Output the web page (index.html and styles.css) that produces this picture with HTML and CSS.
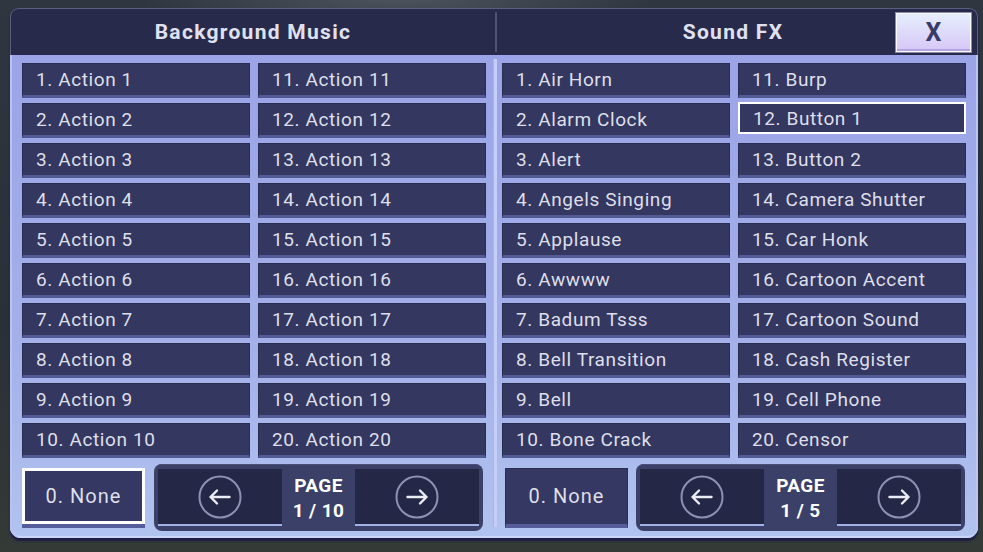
FILE: index.html
```html
<!DOCTYPE html>
<html lang="en">
<head>
    <meta charset="UTF-8">
    <meta name="viewport" content="width=device-width, initial-scale=1.0">
    <title>Sound Board</title>
    <link rel="stylesheet" href="styles.css">
</head>
<body>
    <div class="dialog">
        <div class="header">
            <div class="title title-left">Background Music</div>
            <div class="title title-right">Sound FX</div>
            <button class="close" type="button">X</button>
        </div>

        <div class="content">
            <section class="panel">
                <div class="list">
                    <button class="item">1. Action 1</button>
                    <button class="item">2. Action 2</button>
                    <button class="item">3. Action 3</button>
                    <button class="item">4. Action 4</button>
                    <button class="item">5. Action 5</button>
                    <button class="item">6. Action 6</button>
                    <button class="item">7. Action 7</button>
                    <button class="item">8. Action 8</button>
                    <button class="item">9. Action 9</button>
                    <button class="item">10. Action 10</button>
                    <button class="item">11. Action 11</button>
                    <button class="item">12. Action 12</button>
                    <button class="item">13. Action 13</button>
                    <button class="item">14. Action 14</button>
                    <button class="item">15. Action 15</button>
                    <button class="item">16. Action 16</button>
                    <button class="item">17. Action 17</button>
                    <button class="item">18. Action 18</button>
                    <button class="item">19. Action 19</button>
                    <button class="item">20. Action 20</button>
                </div>
                <div class="footer">
                    <button class="none selected">0. None</button>
                    <div class="pager">
                        <button class="pg" type="button">
                            <svg viewBox="0 0 44 44" width="44" height="44"><circle cx="22" cy="22" r="20.5" class="ring"/><path d="M31.5 22H12.5M19 15.5L12.5 22L19 28.5" class="arrow"/></svg>
                        </button>
                        <div class="pg-label">PAGE<br>1 / 10</div>
                        <button class="pg" type="button">
                            <svg viewBox="0 0 44 44" width="44" height="44"><circle cx="22" cy="22" r="20.5" class="ring"/><path d="M12.5 22H31.5M25 15.5L31.5 22L25 28.5" class="arrow"/></svg>
                        </button>
                    </div>
                </div>
            </section>

            <div class="divider"></div>

            <section class="panel">
                <div class="list">
                    <button class="item">1. Air Horn</button>
                    <button class="item">2. Alarm Clock</button>
                    <button class="item">3. Alert</button>
                    <button class="item">4. Angels Singing</button>
                    <button class="item">5. Applause</button>
                    <button class="item">6. Awwww</button>
                    <button class="item">7. Badum Tsss</button>
                    <button class="item">8. Bell Transition</button>
                    <button class="item">9. Bell</button>
                    <button class="item">10. Bone Crack</button>
                    <button class="item">11. Burp</button>
                    <button class="item selected">12. Button 1</button>
                    <button class="item">13. Button 2</button>
                    <button class="item">14. Camera Shutter</button>
                    <button class="item">15. Car Honk</button>
                    <button class="item">16. Cartoon Accent</button>
                    <button class="item">17. Cartoon Sound</button>
                    <button class="item">18. Cash Register</button>
                    <button class="item">19. Cell Phone</button>
                    <button class="item">20. Censor</button>
                </div>
                <div class="footer footer-right">
                    <button class="none">0. None</button>
                    <div class="pager">
                        <button class="pg" type="button">
                            <svg viewBox="0 0 44 44" width="44" height="44"><circle cx="22" cy="22" r="20.5" class="ring"/><path d="M31.5 22H12.5M19 15.5L12.5 22L19 28.5" class="arrow"/></svg>
                        </button>
                        <div class="pg-label">PAGE<br>1 / 5</div>
                        <button class="pg" type="button">
                            <svg viewBox="0 0 44 44" width="44" height="44"><circle cx="22" cy="22" r="20.5" class="ring"/><path d="M12.5 22H31.5M25 15.5L31.5 22L25 28.5" class="arrow"/></svg>
                        </button>
                    </div>
                </div>
            </section>
        </div>
    </div>
</body>
</html>
```

FILE: styles.css
```css
body { margin: 0; height: 552px; overflow: hidden; font-family: Roboto, "Liberation Sans", sans-serif;
    background: radial-gradient(ellipse 260px 30px at 400px 0, #4c535c, transparent), linear-gradient(#2f363f, #2a3038 60%, #343a36); }
button { font-family: inherit; cursor: pointer; padding: 0; }

.dialog { width: 968px; margin: 8px 0 0 10px; border-radius: 9px 9px 11px 11px; box-shadow: 0 3px 2px #1d1b45; }

.header { position: relative; display: flex; align-items: center; height: 46px; background: #272a4b;
    border: 1px solid #5a5f80; border-bottom: 0; border-radius: 9px 9px 0 0; }
.title { height: 40px; line-height: 40px; text-align: center; color: #e0e1f0; font-weight: bold; font-size: 21px; letter-spacing: 1.3px; }
.title-left { width: 484px; border-right: 2px solid #4d5272; }
.title-right { flex: 1; padding-right: 8px; }
.close { position: absolute; right: 5px; top: 3px; width: 77px; height: 41px; font-size: 25px; font-weight: bold; color: #393c69;
    background: linear-gradient(#e6effd, #d6c6f7); border: 1px solid #8d8ca6; box-shadow: inset 0 0 0 1px #fbfbff, inset 0 -3px 0 #b4a6e2; }

.content { display: flex; padding: 8px 12px 7px 12px; border-radius: 0 0 11px 11px;
    background: linear-gradient(#9aa4e7, #a4b0ea 60%, #b1c3ef);
    box-shadow: inset 2px 0 0 #b9c3f3, inset -2px 0 0 #b9c6f2, inset 0 -2px 0 #c8d6f8; }
.panel { width: 464px; }
.divider { width: 4px; margin: -4px 5px 4px 7px; background: #c6cdf7; border-left: 1px solid #aab3ee; }

.list { display: grid; grid-template-columns: 228px 228px; grid-template-rows: repeat(10, 35px); grid-auto-flow: column; column-gap: 8px; row-gap: 5px; }
.item { box-sizing: border-box; text-align: left; padding: 0 0 0 13px; font-size: 19px; letter-spacing: 0.6px; color: #dedfea;
    background: #343760; border: 1px solid #2a2c50; border-bottom: 3px solid #535b97; }
.item.selected { height: 32px; margin-top: -1px; border: 2px solid #ffffff; }

.footer { display: flex; align-items: center; gap: 9px; margin-top: 6px; }
.footer-right { padding-left: 3px; gap: 8px; }
.none { box-sizing: border-box; width: 123px; height: 60px; font-size: 20px; letter-spacing: 1px; color: #dedfea;
    background: #353862; border: 1px solid #2a2c50; border-bottom: 4px solid #545c9a; }
.none.selected { border: 3px solid #ffffff; box-shadow: 0 4px 0 #545c9a; height: 56px; margin-bottom: 4px; }

.pager { box-sizing: border-box; display: flex; width: 329px; height: 67px; padding: 5px 4px 5px 4px; border-radius: 8px;
    background: #3a4068; box-shadow: inset 0 1px 0 #4a5179; }
.pg { width: 124px; height: 57px; background: #252746; border: 0; border-bottom: 2px solid #a3b2e6; display: flex; align-items: center; justify-content: center; }
.pg svg { display: block; }
.ring { fill: none; stroke: #8d91b4; stroke-width: 2; }
.arrow { fill: none; stroke: #ececf5; stroke-width: 2.4; stroke-linecap: round; stroke-linejoin: round; }
.pg-label { flex: 1; display: flex; align-items: center; justify-content: center; text-align: center; color: #ffffff;
    font-weight: bold; font-size: 19px; line-height: 25px; letter-spacing: 0.4px; }
```
